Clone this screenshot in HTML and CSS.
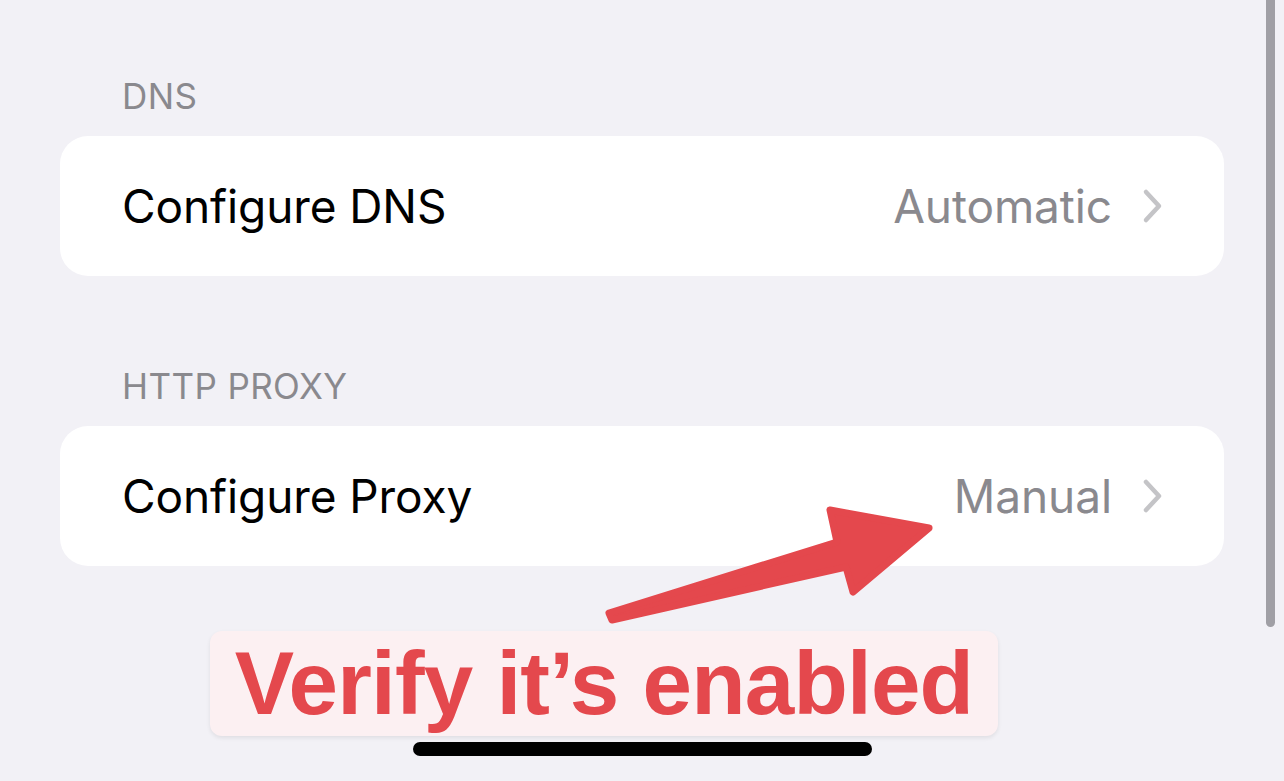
FILE: index.html
```html
<!DOCTYPE html>
<html>
<head>
<meta charset="utf-8">
<link rel="stylesheet" href="styles.css">
</head>
<body>
<div class="screen">
  <div class="list">
    <div class="section-header">DNS</div>
    <div class="card">
      <div class="row">
        <span class="row-title">Configure DNS</span>
        <span class="row-value">Automatic</span>
        <svg class="chevron" width="22" height="36" viewBox="0 0 22 36"><path d="M4 4 L17 18 L4 32" fill="none" stroke="#c4c4c7" stroke-width="4.5" stroke-linecap="round" stroke-linejoin="round"/></svg>
      </div>
    </div>
    <div class="section-header second">HTTP PROXY</div>
    <div class="card">
      <div class="row">
        <span class="row-title">Configure Proxy</span>
        <span class="row-value">Manual</span>
        <svg class="chevron" width="22" height="36" viewBox="0 0 22 36"><path d="M4 4 L17 18 L4 32" fill="none" stroke="#c4c4c7" stroke-width="4.5" stroke-linecap="round" stroke-linejoin="round"/></svg>
      </div>
    </div>
  </div>
  <div class="scrollbar"></div>
  <svg class="arrow" width="1284" height="781" viewBox="0 0 1284 781">
    <path d="M609 613 L837 542 L830 510 L929 528 L853 592 L846 567 L612 620 Z" fill="#e4484d" stroke="#e4484d" stroke-width="7" stroke-linejoin="round"/>
  </svg>
  <div class="callout"><span>Verify it’s enabled</span></div>
  <div class="home-indicator"></div>
</div>
</body>
</html>
```

FILE: styles.css
```css
html, body {
  margin: 0;
  padding: 0;
}
body {
  background: #f2f1f6;
  font-family: Inter, "Noto Sans", sans-serif;
}
.screen {
  position: relative;
  width: 1284px;
  height: 781px;
  overflow: hidden;
  background: #f2f1f6;
}
.list {
  padding: 76px 60px 0 60px;
  display: flex;
  flex-direction: column;
}
.section-header {
  padding-left: 62px;
  font-size: 35px;
  line-height: 40px;
  color: #8a898e;
  letter-spacing: 0.4px;
  margin-bottom: 20px;
}
.section-header.second {
  margin-top: 90px;
}
.card {
  background: #ffffff;
  border-radius: 28px;
  height: 140px;
  display: flex;
  align-items: center;
}
.row {
  flex: 1;
  display: flex;
  align-items: center;
  padding: 0 60px 0 62px;
}
.row-title {
  flex: 1;
  font-size: 46px;
  color: #000000;
  letter-spacing: -0.1px;
}
.row-value {
  font-size: 46px;
  color: #8a898e;
  letter-spacing: -0.1px;
  margin-right: 30px;
}
.chevron {
  display: block;
}
.scrollbar {
  position: absolute;
  right: 9px;
  top: -10px;
  width: 9px;
  height: 637px;
  border-radius: 5px;
  background: #a09fa5;
}
.arrow {
  position: absolute;
  left: 0;
  top: 0;
}
.callout {
  position: absolute;
  left: 210px;
  top: 631px;
  width: 788px;
  height: 105px;
  background: #fcf0f2;
  border-radius: 12px;
  box-shadow: 0 2px 4px rgba(0,0,0,0.08);
  display: flex;
  align-items: center;
  justify-content: center;
}
.callout span {
  font-family: "Liberation Sans", Arial, sans-serif;
  font-weight: bold;
  font-size: 89px;
  letter-spacing: -0.8px;
  color: #e4484d;
  line-height: 1;
  margin-top: 0;
}
.home-indicator {
  position: absolute;
  left: 413px;
  top: 742px;
  width: 459px;
  height: 14px;
  border-radius: 7px;
  background: #000000;
}
```
